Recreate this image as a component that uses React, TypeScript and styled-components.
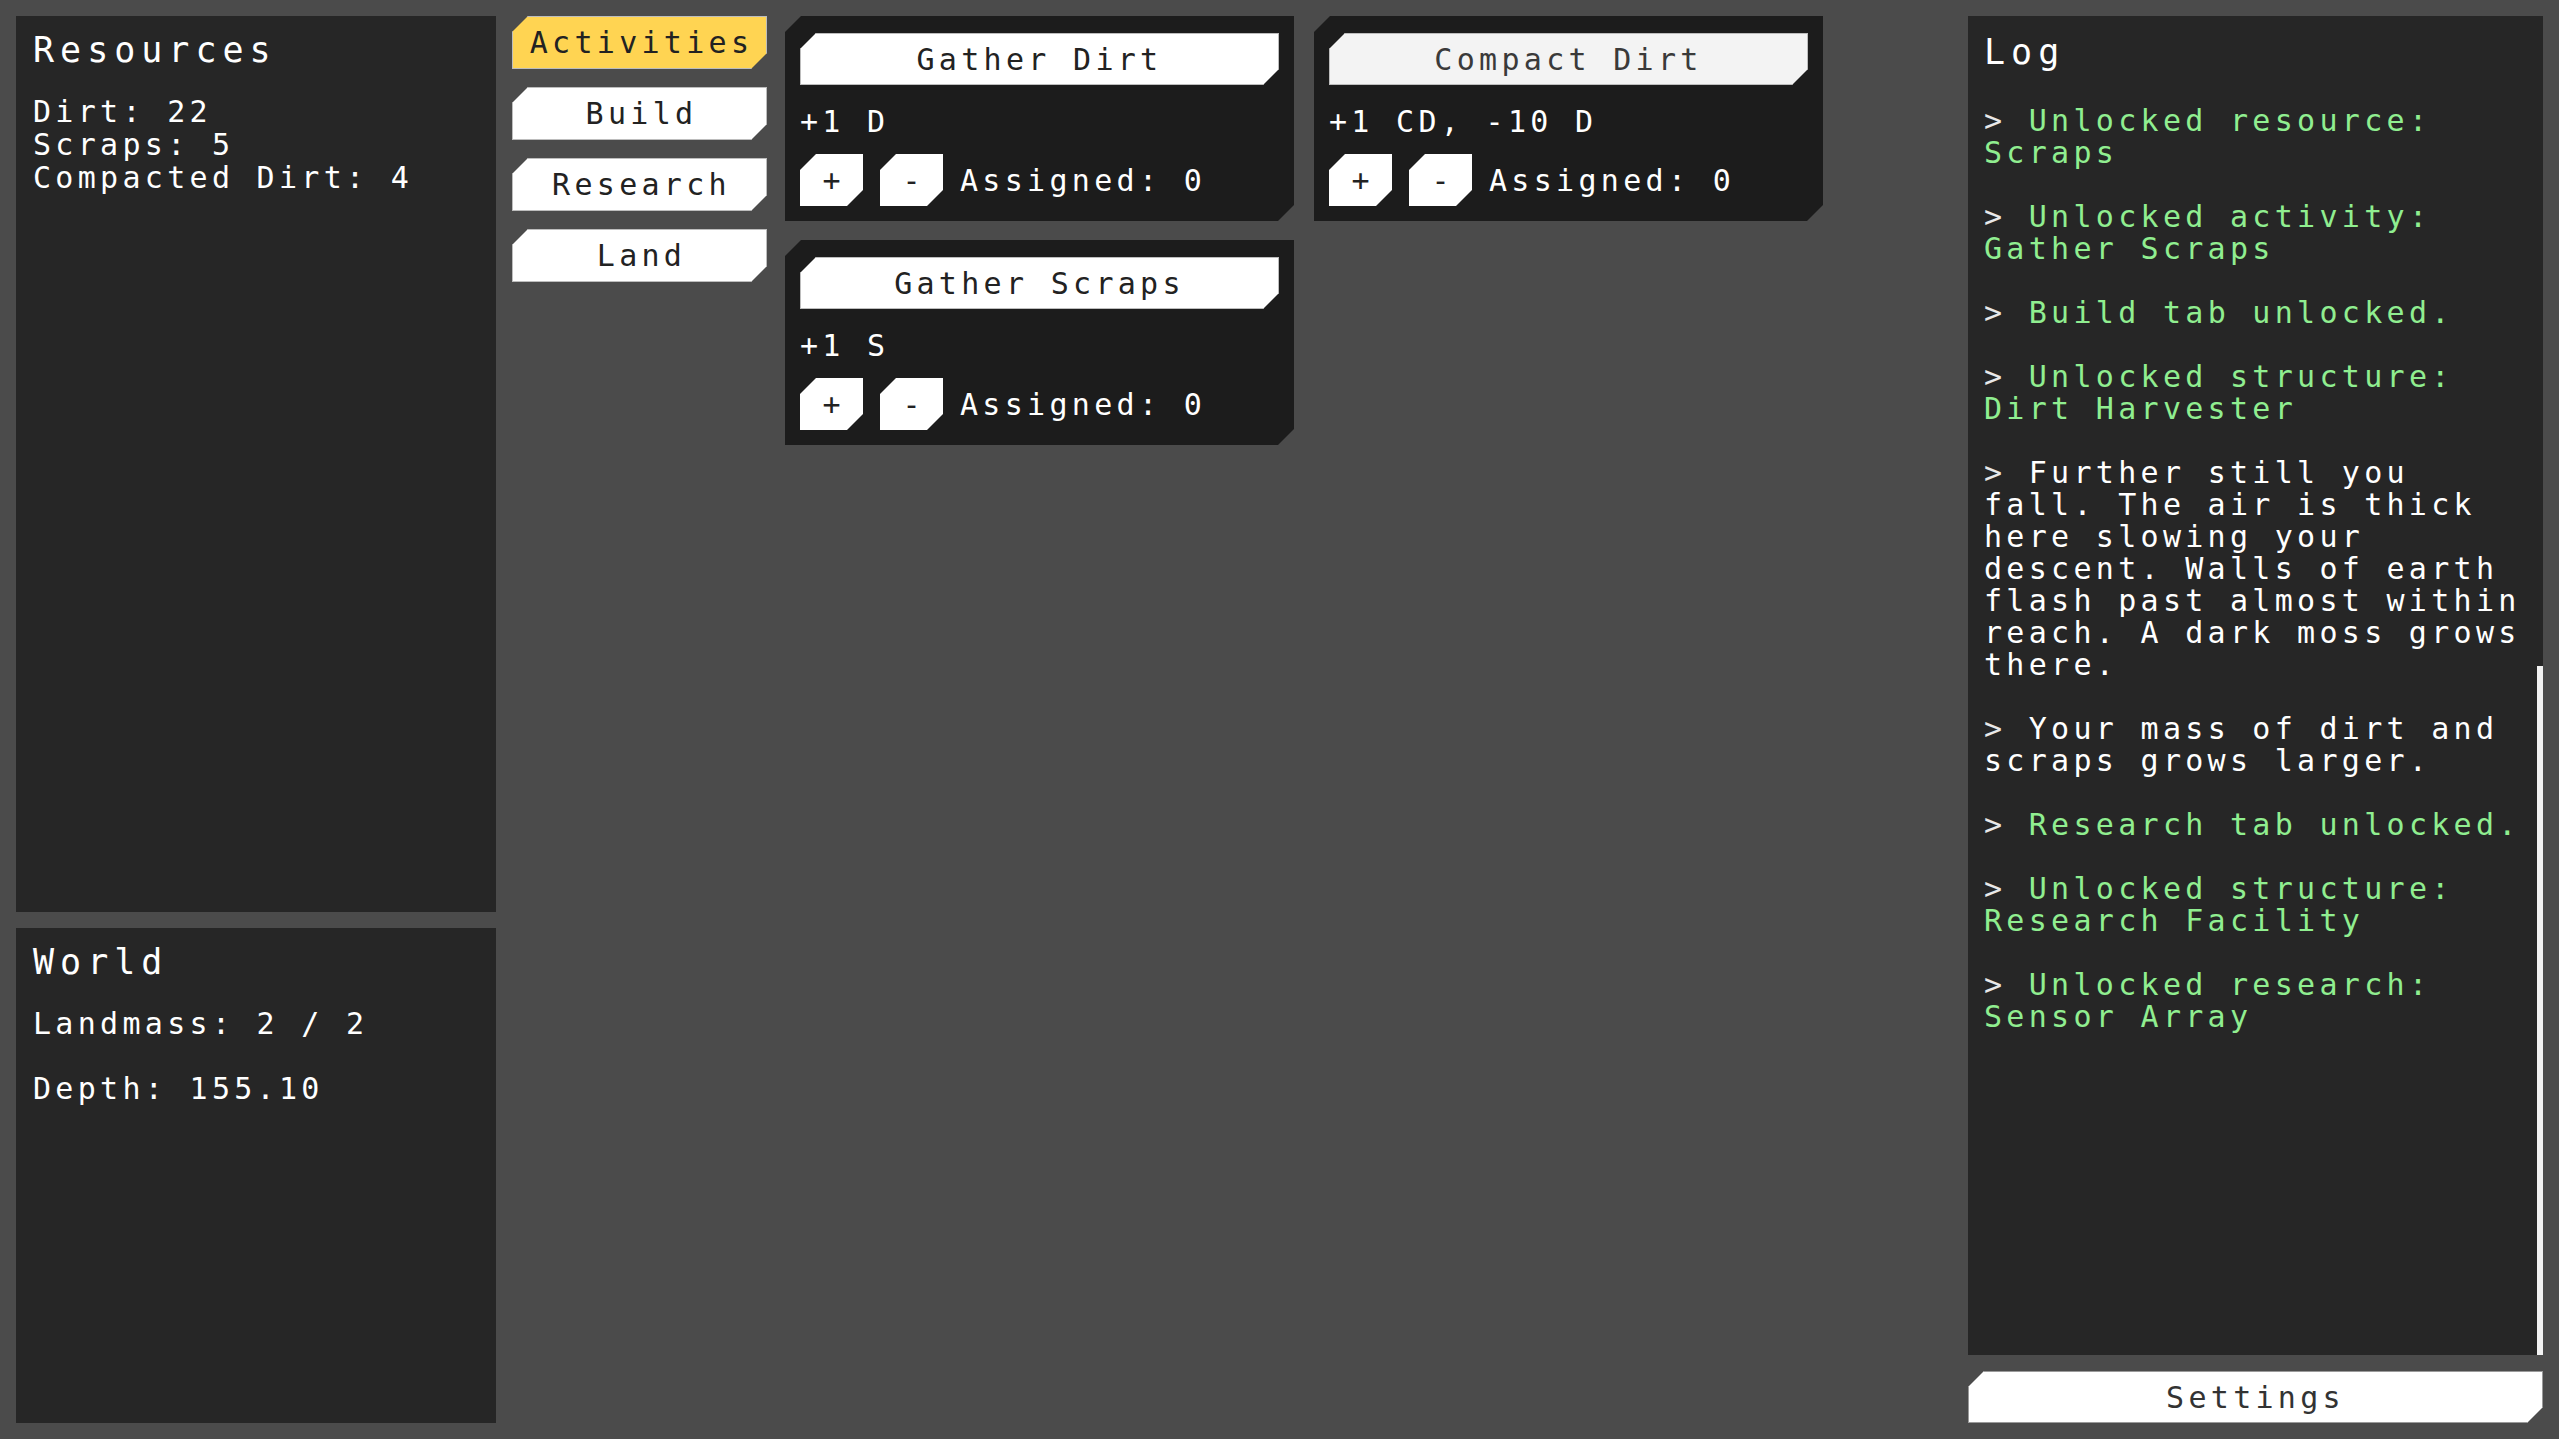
import React from 'react';
import styled, { createGlobalStyle } from 'styled-components';

const GlobalStyle = createGlobalStyle`
  html, body {
    margin: 0;
    padding: 0;
    background: #4b4b4b;
    font-family: "DejaVu Sans Mono", "Liberation Mono", monospace;
  }
  * { box-sizing: border-box; }
`;

// cut the top-left and bottom-right corners
const chamfer = (size: number) => `
  clip-path: polygon(${size}px 0, 100% 0, 100% calc(100% - ${size}px), calc(100% - ${size}px) 100%, 0 100%, 0 ${size}px);
`;

const Screen = styled.div`
  display: grid;
  grid-template-columns: 480px 255px 1fr 575px;
  column-gap: 16px;
  height: 100vh;
  padding: 16px;
`;

const LeftColumn = styled.div`
  display: grid;
  grid-template-rows: 896px 1fr;
  row-gap: 16px;
  min-height: 0;
`;

const Panel = styled.section`
  background: #262626;
  color: #ffffff;
  padding: 14px 17px;
  overflow: hidden;
`;

const PanelTitle = styled.h2`
  margin: 0 0 25px;
  font-size: 35px;
  font-weight: normal;
  line-height: 40px;
  letter-spacing: 6px;
`;

const StatLine = styled.div`
  font-size: 30px;
  line-height: 33px;
  letter-spacing: 4.3px;
  white-space: pre;
`;

const StatPara = styled(StatLine)`
  margin-bottom: 32px;
`;

const TabColumn = styled.nav`
  display: flex;
  flex-direction: column;
  gap: 18px;
`;

const Tab = styled.button<{ $active?: boolean }>`
  ${chamfer(16)}
  height: 53px;
  width: 100%;
  border: 1px solid #bdbdbd;
  background: ${(p) => (p.$active ? '#ffd452' : '#ffffff')};
  color: #222222;
  font-family: inherit;
  font-size: 30px;
  letter-spacing: 4.3px;
  padding: 0 0 0 4px;
  cursor: pointer;
`;

const CardArea = styled.div`
  display: grid;
  grid-template-columns: 509px 509px;
  align-items: start;
  column-gap: 20px;
  margin-left: 2px;
`;

const CardStack = styled.div`
  display: flex;
  flex-direction: column;
  gap: 19px;
`;

const Card = styled.div`
  ${chamfer(16)}
  background: #1c1c1c;
  color: #ffffff;
  padding: 17px 15px 15px;
  display: flex;
  flex-direction: column;
`;

const ActionButton = styled.button<{ $dim?: boolean }>`
  ${chamfer(16)}
  height: 52px;
  width: 100%;
  border: 1px solid #bdbdbd;
  background: ${(p) => (p.$dim ? '#f3f3f3' : '#ffffff')};
  color: ${(p) => (p.$dim ? '#3a3a3a' : '#222222')};
  font-family: inherit;
  font-size: 30px;
  letter-spacing: 4.3px;
  cursor: pointer;
`;

const Effect = styled.div`
  margin: 21px 0 16px;
  font-size: 30px;
  line-height: 32px;
  letter-spacing: 4.3px;
  white-space: pre;
`;

const Controls = styled.div`
  display: flex;
  align-items: center;
  gap: 17px;
`;

const SmallButton = styled.button`
  ${chamfer(16)}
  width: 63px;
  height: 52px;
  border: none;
  background: #ffffff;
  color: #222222;
  font-family: inherit;
  font-size: 30px;
  padding: 0;
  cursor: pointer;
`;

const Assigned = styled.span`
  font-size: 30px;
  letter-spacing: 4.3px;
`;

const RightColumn = styled.div`
  display: flex;
  flex-direction: column;
  gap: 16px;
  min-height: 0;
`;

const LogPanel = styled(Panel)`
  position: relative;
  flex: 1;
  padding: 16px 20px 16px 16px;
`;

const LogTitle = styled(PanelTitle)`
  margin-bottom: 33px;
`;

// the leading ">" stays light grey whatever the entry colour
const LogEntry = styled.p<{ $tone: 'green' | 'white' }>`
  margin: 0 0 32px;
  width: 545px;
  font-size: 30px;
  line-height: 32px;
  letter-spacing: 4.3px;
  color: ${(p) => (p.$tone === 'green' ? '#90ee90' : '#ffffff')};

  &::first-letter {
    color: #e8e8e8;
  }
`;

const ScrollThumb = styled.div`
  position: absolute;
  right: 0;
  top: 650px;
  bottom: 0;
  width: 6px;
  background: #f2f2f2;
`;

const SettingsButton = styled.button`
  ${chamfer(16)}
  height: 52px;
  width: 100%;
  border: 1px solid #9a9a9a;
  background: #ffffff;
  color: #333333;
  font-family: inherit;
  font-size: 30px;
  letter-spacing: 4.3px;
  cursor: pointer;
`;

type Activity = { name: string; effect: string; assigned: number; dim?: boolean };

const column1: Activity[] = [
  { name: 'Gather Dirt', effect: '+1 D', assigned: 0 },
  { name: 'Gather Scraps', effect: '+1 S', assigned: 0 },
];
const column2: Activity[] = [{ name: 'Compact Dirt', effect: '+1 CD, -10 D', assigned: 0, dim: true }];

const logEntries: { text: string; tone: 'green' | 'white' }[] = [
  { text: 'Unlocked resource: Scraps', tone: 'green' },
  { text: 'Unlocked activity: Gather Scraps', tone: 'green' },
  { text: 'Build tab unlocked.', tone: 'green' },
  { text: 'Unlocked structure: Dirt Harvester', tone: 'green' },
  {
    text: 'Further still you fall. The air is thick here slowing your descent. Walls of earth flash past almost within reach. A dark moss grows there.',
    tone: 'white',
  },
  { text: 'Your mass of dirt and scraps grows larger.', tone: 'white' },
  { text: 'Research tab unlocked.', tone: 'green' },
  { text: 'Unlocked structure: Research Facility', tone: 'green' },
  { text: 'Unlocked research: Sensor Array', tone: 'green' },
];

const ActivityCard: React.FC<{ activity: Activity }> = ({ activity }) => (
  <Card>
    <ActionButton $dim={activity.dim}>{activity.name}</ActionButton>
    <Effect>{activity.effect}</Effect>
    <Controls>
      <SmallButton>+</SmallButton>
      <SmallButton>-</SmallButton>
      <Assigned>Assigned: {activity.assigned}</Assigned>
    </Controls>
  </Card>
);

const App: React.FC = () => {
  const tabs = ['Activities', 'Build', 'Research', 'Land'];

  return (
    <>
      <GlobalStyle />
      <Screen>
        <LeftColumn>
          <Panel>
            <PanelTitle>Resources</PanelTitle>
            <StatLine>Dirt: 22</StatLine>
            <StatLine>Scraps: 5</StatLine>
            <StatLine>Compacted Dirt: 4</StatLine>
          </Panel>
          <Panel>
            <PanelTitle>World</PanelTitle>
            <StatPara>Landmass: 2 / 2</StatPara>
            <StatPara>Depth: 155.10</StatPara>
          </Panel>
        </LeftColumn>

        <TabColumn>
          {tabs.map((t) => (
            <Tab key={t} $active={t === 'Activities'}>
              {t}
            </Tab>
          ))}
        </TabColumn>

        <CardArea>
          <CardStack>
            {column1.map((a) => (
              <ActivityCard key={a.name} activity={a} />
            ))}
          </CardStack>
          <CardStack>
            {column2.map((a) => (
              <ActivityCard key={a.name} activity={a} />
            ))}
          </CardStack>
        </CardArea>

        <RightColumn>
          <LogPanel>
            <LogTitle>Log</LogTitle>
            {logEntries.map((e, i) => (
              <LogEntry key={i} $tone={e.tone}>
                {`> ${e.text}`}
              </LogEntry>
            ))}
            <ScrollThumb />
          </LogPanel>
          <SettingsButton>Settings</SettingsButton>
        </RightColumn>
      </Screen>
    </>
  );
};

export default App;
